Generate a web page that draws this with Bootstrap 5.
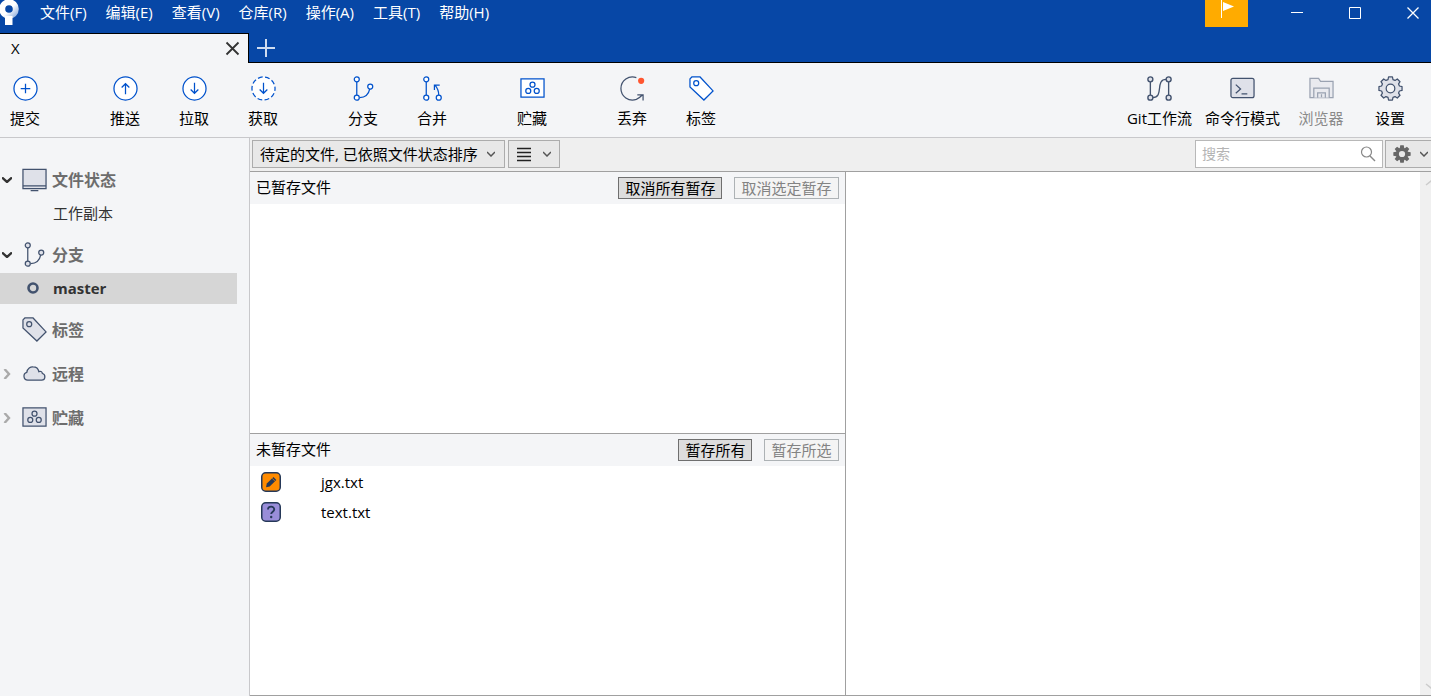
<!DOCTYPE html>
<html lang="zh-CN">
<head>
<meta charset="utf-8">
<meta name="viewport" content="width=device-width, initial-scale=1">
<title>X</title>
<link href="https://cdn.jsdelivr.net/npm/bootstrap@5.3.0/dist/css/bootstrap.min.css" rel="stylesheet">
<style>
  :root {
    --brand: #0747a6;
    --icon-blue: #0052cc;
    --icon-slate: #42526e;
    --icon-fill: #dfe1e9;
    --surface: #f4f5f7;
    --bar: #efefef;
    --line: #a0a0a0;
    --line-soft: #c8c8cb;
  }
  body { font-family: "Open Sans", "Noto Sans CJK SC", sans-serif; font-size: 15px; line-height: 20px; color: #000; background: #fff; }
  svg { display: block; flex: none; fill: none; overflow: visible; }
  button { color: inherit; }
  .plain { border: 0; padding: 0; background: none; }

  .titlebar { background: var(--brand); border-bottom: 1px solid #000; color: #fff; }
  .menu-row { height: 33px; }
  .menu-list { gap: 19px; margin-left: 21px; padding-top: 2px; }
  .menu-list a { color: #fff; text-decoration: none; }
  .flag-btn { width: 43px; height: 27px; background: #ffab00; margin-right: 39px; }
  .window-btns { gap: 38px; padding: 3px 8px 0 0; }
  .window-btns button { width: 20px; height: 20px; display: grid; place-items: center; }
  .repo-tab { width: 249px; height: 30px; margin-bottom: -1px; padding: 0 9px 2px 11px; background: var(--surface); color: #000; border: solid #000; border-width: 1px 1px 0 0; }
  .repo-tab button { padding-top: 1px; }
  .add-tab { width: 34px; }

  .toolbar { background: var(--surface); border-bottom: 1px solid var(--line-soft); height: 75px; }
  .tool-groups { gap: 50px; }
  .tool-group { gap: 19px; }
  .tool-group-end { gap: 13px; padding-right: 13px; }
  .tool { min-width: 50px; padding-top: 13px; display: flex; flex-direction: column; align-items: center; gap: 7px; white-space: nowrap; }
  .tool-group-end .tool { min-width: 56px; }
  .tool:disabled { color: #8a8a8a; }
  .tool:disabled svg { opacity: .5; }
  .blue, .slate { height: 25px; }
  .blue { stroke: var(--icon-blue); --fill: #fff; }
  .slate { stroke: var(--icon-slate); --fill: var(--icon-fill); }
  .tinted { fill: var(--fill); }

  .sidebar { width: 250px; flex: none; padding: 23px 12px 0 0; background: var(--surface); border-right: 1px solid var(--line-soft); }
  .side-group { margin-bottom: 7px; }
  .side-head { width: 100%; height: 37px; color: #6d6d6d; font-size: 16px; font-weight: 700; }
  .side-head .chevron { width: 22px; padding-left: 2px; }
  .side-head .side-icon { width: 30px; }
  .side-item { height: 31px; padding-bottom: 2px; color: #333; text-decoration: none; }
  .side-item .bullet { width: 53px; padding-left: 27px; }
  .side-item.current { background: #d6d6d6; font-weight: 700; }

  .filterbar { background: var(--bar); border-bottom: 1px solid var(--line); height: 34px; padding: 2px 0 0 2px; gap: 3px; }
  .ctl { height: 28px; border: 1px solid #acacac; border-radius: 0; background-color: #e8e8e8; color: #000; }
  .sort-select { width: 253px; padding: 0 24px 0 7px; font-size: 15px; line-height: 20px; background-position: right 9px center; background-size: 8px 6px;
    background-image: url("data:image/svg+xml,%3Csvg xmlns='http://www.w3.org/2000/svg' viewBox='0 0 8 6'%3E%3Cpath d='M0 1l4 4 4-4' fill='none' stroke='%23555' stroke-width='1.5'/%3E%3C/svg%3E"); }
  .view-btn { width: 52px; padding: 0 8px; }
  .search-box { width: 188px; height: 28px; border: 1px solid #b8b8b8; background: #fff; padding: 0 6px; }
  .search-box input { border: 0; outline: 0; padding: 0; min-width: 0; font-size: 14px; background: none; }
  .search-box input::placeholder { color: #b4b4b4; }
  .gear-btn { width: 46px; margin-left: -1px; padding: 0 3px 0 7px; border-right: 0; }

  .files { flex: 594 1 0; border-right: 1px solid var(--line); }
  .preview { flex: 585 1 0; }
  .workspace, .pane-top { border-bottom: 1px solid var(--line); }
  .pane { flex: 1 1 0; }
  .pane-head { height: 32px; background: var(--surface); padding: 0 6px; gap: 12px; }
  .pane-head span { padding-bottom: 2px; }
  .stage-btn { height: 22px; border: 1px solid #6f6f6f; background: #ddd; padding: 0 6px; line-height: 20px; }
  .stage-btn:disabled { border-color: #adb2b5; background: #f4f4f4; color: #838383; }
  .file-list { padding-top: 1px; }
  .file-row { height: 30px; padding-left: 11px; gap: 40px; }
  .scroll-rail { width: 11px; background: #f0f0f0; padding: 8px 0 6px 5px; overflow: hidden; }
</style>
</head>
<body class="vh-100 d-flex flex-column overflow-hidden">

<svg width="0" height="0" class="position-absolute" aria-hidden="true">
  <symbol id="i-branch" viewBox="0 0 26 26">
    <path d="M6 6v15M9 22.500c6 0 9.500-4 10.500-9"/><circle class="tinted" cx="6" cy="3.500" r="2.600"/><circle class="tinted" cx="6" cy="22.500" r="2.600"/><circle class="tinted" cx="20" cy="11" r="2.600"/>
  </symbol>
  <symbol id="i-stash" viewBox="0 0 26 26">
    <path class="tinted" d="M1 3h24v19H1z"/><circle cx="13" cy="9" r="2.600"/><circle cx="8.600" cy="15.500" r="2.600"/><circle cx="17.400" cy="15.500" r="2.600"/>
  </symbol>
  <symbol id="i-tag" viewBox="0 0 26 26">
    <path class="tinted" d="M1 3l2-2h8.500L25 15.500 15.500 25 1 11.500z"/><circle cx="7.500" cy="7.500" r="2.600"/>
  </symbol>
  <symbol id="i-down" viewBox="0 0 10 6"><path d="M0 .5l5 4.500 5-4.500" stroke="#333" stroke-width="2.400"/></symbol>
  <symbol id="i-right" viewBox="0 0 6 10"><path d="M.5 0l4.500 5-4.500 5" stroke="#aaa" stroke-width="2.400"/></symbol>
  <symbol id="i-caret" viewBox="0 0 8 6"><path d="M0 1l4 4 4-4" stroke="#555" stroke-width="1.500"/></symbol>
</svg>

<header class="titlebar">
  <div class="menu-row d-flex align-items-start">
    <svg width="19" height="26" viewBox="0 0 19 26">
      <defs><linearGradient id="logo-shade" x1="0" x2="1" y1="0" y2="1"><stop offset=".55" stop-color="#fff"/><stop offset="1" stop-color="#9db9e2"/></linearGradient></defs>
      <circle cx="9" cy="9" r="6.800" stroke="url(#logo-shade)" stroke-width="6"/><path d="M5 16h7.500v9H5z" fill="#fff"/>
    </svg>
    <nav class="menu-list d-flex" aria-label="主菜单">
      <a href="#">文件(F)</a><a href="#">编辑(E)</a><a href="#">查看(V)</a><a href="#">仓库(R)</a><a href="#">操作(A)</a><a href="#">工具(T)</a><a href="#">帮助(H)</a>
    </nav>
    <button class="plain flag-btn ms-auto d-flex justify-content-center" aria-label="通知">
      <svg width="14" height="18" viewBox="0 0 14 18"><path d="M1.500 0v18" stroke="#fff"/><path d="M3 2l11 4.500L3 11z" fill="#fff"/></svg>
    </button>
    <div class="window-btns d-flex">
      <button class="plain" aria-label="最小化"><svg width="12" height="12"><path d="M0 5.500h12" stroke="#fff"/></svg></button>
      <button class="plain" aria-label="最大化"><svg width="12" height="12"><path d="M.5 .5h11v11H.5z" stroke="#fff"/></svg></button>
      <button class="plain" aria-label="关闭"><svg width="12" height="12"><path d="M.5 .5l11 11M11.500 .5l-11 11" stroke="#fff" stroke-width="1.300"/></svg></button>
    </div>
  </div>
  <div class="d-flex">
    <div class="repo-tab d-flex align-items-center justify-content-between">
      <span>X</span>
      <button class="plain" aria-label="关闭标签页"><svg width="13" height="13"><path d="M.5 .5l12 12M12.500 .5l-12 12" stroke="#333" stroke-width="1.800"/></svg></button>
    </div>
    <button class="plain add-tab d-flex align-items-center justify-content-center" aria-label="新标签页"><svg width="18" height="18"><path d="M9 0v18M0 9h18" stroke="#cfdcf0" stroke-width="2"/></svg></button>
  </div>
</header>

<div class="toolbar d-flex justify-content-between" role="toolbar">
  <div class="tool-groups d-flex">
    <div class="tool-group d-flex">
      <button class="plain tool"><svg class="blue" width="25" viewBox="0 0 26 26" stroke-width="1.300"><circle class="tinted" cx="13" cy="13" r="12"/><path d="M13 8v10M8 13h10"/></svg>提交</button>
    </div>
    <div class="tool-group d-flex">
      <button class="plain tool"><svg class="blue" width="25" viewBox="0 0 26 26" stroke-width="1.300"><circle class="tinted" cx="13" cy="13" r="12"/><path d="M13 19V8M9 12l4-4 4 4"/></svg>推送</button>
      <button class="plain tool"><svg class="blue" width="25" viewBox="0 0 26 26" stroke-width="1.300"><circle class="tinted" cx="13" cy="13" r="12"/><path d="M13 7v11M9 14l4 4 4-4"/></svg>拉取</button>
      <button class="plain tool"><svg class="blue" width="25" viewBox="0 0 26 26" stroke-width="1.300"><circle class="tinted" cx="13" cy="13" r="12" stroke-dasharray="5 2.540" stroke-dashoffset="2.500"/><path d="M13 7v11M9 14l4 4 4-4"/></svg>获取</button>
    </div>
    <div class="tool-group d-flex">
      <button class="plain tool"><svg class="blue" width="25" viewBox="0 0 26 26" stroke-width="1.300"><use href="#i-branch"/></svg>分支</button>
      <button class="plain tool"><svg class="blue" width="25" viewBox="0 0 26 26" stroke-width="1.300"><path d="M6.500 6v14M19.500 20c0-4-1-7-3.500-10M15 14.500V9.500h5.500"/><circle class="tinted" cx="6.500" cy="3.500" r="2.600"/><circle class="tinted" cx="6.500" cy="22.500" r="2.600"/><circle class="tinted" cx="19.500" cy="22.500" r="2.600"/></svg>合并</button>
    </div>
    <div class="tool-group d-flex">
      <button class="plain tool"><svg class="blue" width="25" viewBox="0 0 26 26" stroke-width="1.300"><use href="#i-stash"/></svg>贮藏</button>
    </div>
    <div class="tool-group d-flex">
      <button class="plain tool"><svg class="slate" width="25" viewBox="0 0 26 26" stroke-width="1.300"><path d="M17 1.700A12 12 0 1 0 17 24.300c2.500-1 4.500-2.800 6.500-4.800M18 19.500h6v6"/><circle cx="22" cy="5" r="3.200" fill="#ff5630" stroke="none"/></svg>丢弃</button>
      <button class="plain tool"><svg class="blue" width="25" viewBox="0 0 26 26" stroke-width="1.300"><use href="#i-tag"/></svg>标签</button>
    </div>
  </div>
  <div class="tool-group-end d-flex">
    <button class="plain tool"><svg class="slate" width="27" viewBox="0 0 28 26" stroke-width="1.400"><path d="M4.500 6v14M23.500 6v14M7 22.500C19 22.500 9 3.500 21 3.500"/><circle class="tinted" cx="4.500" cy="3.500" r="2.600"/><circle class="tinted" cx="4.500" cy="22.500" r="2.600"/><circle class="tinted" cx="23.500" cy="3.500" r="2.600"/><circle class="tinted" cx="23.500" cy="22.500" r="2.600"/></svg>Git工作流</button>
    <button class="plain tool"><svg class="slate" width="25" viewBox="0 0 26 26" stroke-width="1.300"><rect class="tinted" x="1" y="2.500" width="24" height="20" rx="2"/><path d="M6 9l5 4.500L6 18M12 18.500h6"/></svg>命令行模式</button>
    <button class="plain tool" disabled><svg class="slate" width="25" viewBox="0 0 26 26" stroke-width="1.300"><path class="tinted" d="M1 22.500v-20h9l2 3h13v17z"/><path class="tinted" d="M5 22.500v-10h16v10"/><path d="M9 22.500v-5h8v5M13 19v3"/></svg>浏览器</button>
    <button class="plain tool"><svg class="slate" width="25" viewBox="-13 -13 26 26" stroke-width="1.300" stroke-linejoin="round"><path class="tinted" d="M-2.600-9.300L-2-12H2L2.600-9.300L4.740-8.410L7.070-9.900L9.900-7.070L8.410-4.740L9.300-2.600L12-2V2L9.300 2.600L8.410 4.740L9.900 7.070L7.070 9.900L4.740 8.410L2.600 9.300L2 12H-2L-2.600 9.300L-4.740 8.410L-7.070 9.900L-9.900 7.070L-8.410 4.740L-9.300 2.600L-12 2V-2L-9.300-2.600L-8.410-4.740L-9.900-7.070L-7.070-9.900L-4.740-8.410z"/><circle r="4.500" fill="#f4f5f7"/></svg>设置</button>
  </div>
</div>

<div class="d-flex flex-grow-1 overflow-hidden">
  <aside class="sidebar">
    <div class="side-group">
      <button class="plain side-head d-flex align-items-center"><span class="chevron"><svg width="10" height="6"><use href="#i-down"/></svg></span><span class="side-icon"><svg class="slate" width="25" viewBox="0 0 26 26" stroke-width="1.300"><path class="tinted" d="M1 2.500h24v20H1z"/><path d="M1 19.500h24M9 24.500h8"/></svg></span>文件状态</button>
      <a class="side-item d-flex align-items-center" href="#"><span class="bullet"></span>工作副本</a>
    </div>
    <div class="side-group">
      <button class="plain side-head d-flex align-items-center"><span class="chevron"><svg width="10" height="6"><use href="#i-down"/></svg></span><span class="side-icon"><svg class="slate" width="25" viewBox="0 0 26 26" stroke-width="1.300"><use href="#i-branch"/></svg></span>分支</button>
      <a class="side-item current d-flex align-items-center" href="#"><span class="bullet"><svg width="12" height="12"><circle cx="6" cy="6" r="4.500" stroke="#42526e" stroke-width="2.600"/></svg></span>master</a>
    </div>
    <div class="side-group">
      <button class="plain side-head d-flex align-items-center"><span class="chevron"></span><span class="side-icon"><svg class="slate" width="25" viewBox="0 0 26 26" stroke-width="1.300"><use href="#i-tag"/></svg></span>标签</button>
    </div>
    <div class="side-group">
      <button class="plain side-head d-flex align-items-center"><span class="chevron"><svg width="10" height="10"><use href="#i-right"/></svg></span><span class="side-icon"><svg class="slate" width="25" viewBox="0 0 26 26" stroke-width="1.300"><path class="tinted" d="M6 20a4.200 4.200 0 0 1-1-8.200C5.500 7.500 9 5.800 11.500 6c3 0 5.500 2 6 5 1.500-.8 3.500 0 3.700 2 3.800 1 3.300 7-.7 7z"/></svg></span>远程</button>
    </div>
    <div class="side-group">
      <button class="plain side-head d-flex align-items-center"><span class="chevron"><svg width="10" height="10"><use href="#i-right"/></svg></span><span class="side-icon"><svg class="slate" width="25" viewBox="0 0 26 26" stroke-width="1.300"><use href="#i-stash"/></svg></span>贮藏</button>
    </div>
  </aside>

  <main class="flex-grow-1 d-flex flex-column">
    <div class="filterbar d-flex align-items-start">
      <select class="form-select ctl sort-select" aria-label="排序方式"><option>待定的文件, 已依照文件状态排序</option></select>
      <button class="ctl view-btn d-flex align-items-center justify-content-between" aria-label="视图">
        <svg width="14" height="13"><path d="M0 .5h14M0 4.500h14M0 8.500h14M0 12.500h14" stroke="#222" stroke-width="1.400"/></svg>
        <svg width="8" height="6"><use href="#i-caret"/></svg>
      </button>
      <label class="search-box d-flex align-items-center ms-auto">
        <input class="flex-grow-1" type="search" placeholder="搜索" aria-label="搜索">
        <svg width="16" height="16"><circle cx="6.500" cy="6" r="5" stroke="#888" stroke-width="1.200"/><path d="M10 10l5 5" stroke="#888" stroke-width="1.400"/></svg>
      </label>
      <button class="ctl gear-btn d-flex align-items-center justify-content-between" aria-label="选项">
        <svg width="18" height="18" viewBox="-13 -13 26 26"><path fill="#666" d="M-3.200-8.500L-2.500-12.500H2.500L3.200-8.500L4-8.200L7.070-10.600L10.600-7.070L8.200-4L8.500-3.200L12.500-2.500V2.500L8.500 3.200L8.200 4L10.600 7.070L7.070 10.600L4 8.200L3.200 8.500L2.500 12.500H-2.500L-3.200 8.500L-4 8.200L-7.070 10.600L-10.600 7.070L-8.200 4L-8.500 3.200L-12.500 2.500V-2.500L-8.500-3.200L-8.200-4L-10.600-7.070L-7.070-10.600L-4-8.200z"/><circle r="4.500" fill="#e8e8e8"/></svg>
        <svg width="8" height="6"><use href="#i-caret"/></svg>
      </button>
    </div>

    <div class="workspace d-flex flex-grow-1">
      <div class="files d-flex flex-column">
        <section class="pane pane-top">
          <div class="pane-head d-flex align-items-center">
            <span class="me-auto">已暂存文件</span>
            <button class="stage-btn">取消所有暂存</button>
            <button class="stage-btn" disabled>取消选定暂存</button>
          </div>
        </section>
        <section class="pane">
          <div class="pane-head d-flex align-items-center">
            <span class="me-auto">未暂存文件</span>
            <button class="stage-btn">暂存所有</button>
            <button class="stage-btn" disabled>暂存所选</button>
          </div>
          <ul class="file-list list-unstyled mb-0">
            <li class="file-row d-flex align-items-center"><svg width="20" height="20"><rect x=".75" y=".75" width="18.500" height="18.500" rx="4" fill="#ff8b00" stroke="#253858" stroke-width="1.500"/><path d="M5 15.200l.8-3.800 6.700-6.300 2.800 2.900-6.600 6.400z" fill="#253858"/><path d="M11 6.200l3 3" stroke="#ff8b00" stroke-width=".7"/></svg>jgx.txt</li>
            <li class="file-row d-flex align-items-center"><svg width="20" height="20"><rect x=".75" y=".75" width="18.500" height="18.500" rx="4" fill="#998dd9" stroke="#253858" stroke-width="1.500"/><path d="M7 7.500c0-4 6.300-3.700 6.200 0 0 2.200-3 2.300-3 4.600" stroke="#253858" stroke-width="1.900"/><circle cx="10.200" cy="15" r="1.200" fill="#253858"/></svg>text.txt</li>
          </ul>
        </section>
      </div>
      <section class="preview d-flex justify-content-end">
        <div class="scroll-rail d-flex flex-column justify-content-between" aria-hidden="true">
          <svg width="12" height="6"><path d="M1 5l5-4 5 4" stroke="#ccc" stroke-width="1.400"/></svg>
          <svg width="12" height="6"><path d="M1 1l5 4 5-4" stroke="#ccc" stroke-width="1.400"/></svg>
        </div>
      </section>
    </div>
  </main>
</div>
<script src="https://cdn.jsdelivr.net/npm/bootstrap@5.3.0/dist/js/bootstrap.bundle.min.js"></script>
</body>
</html>
